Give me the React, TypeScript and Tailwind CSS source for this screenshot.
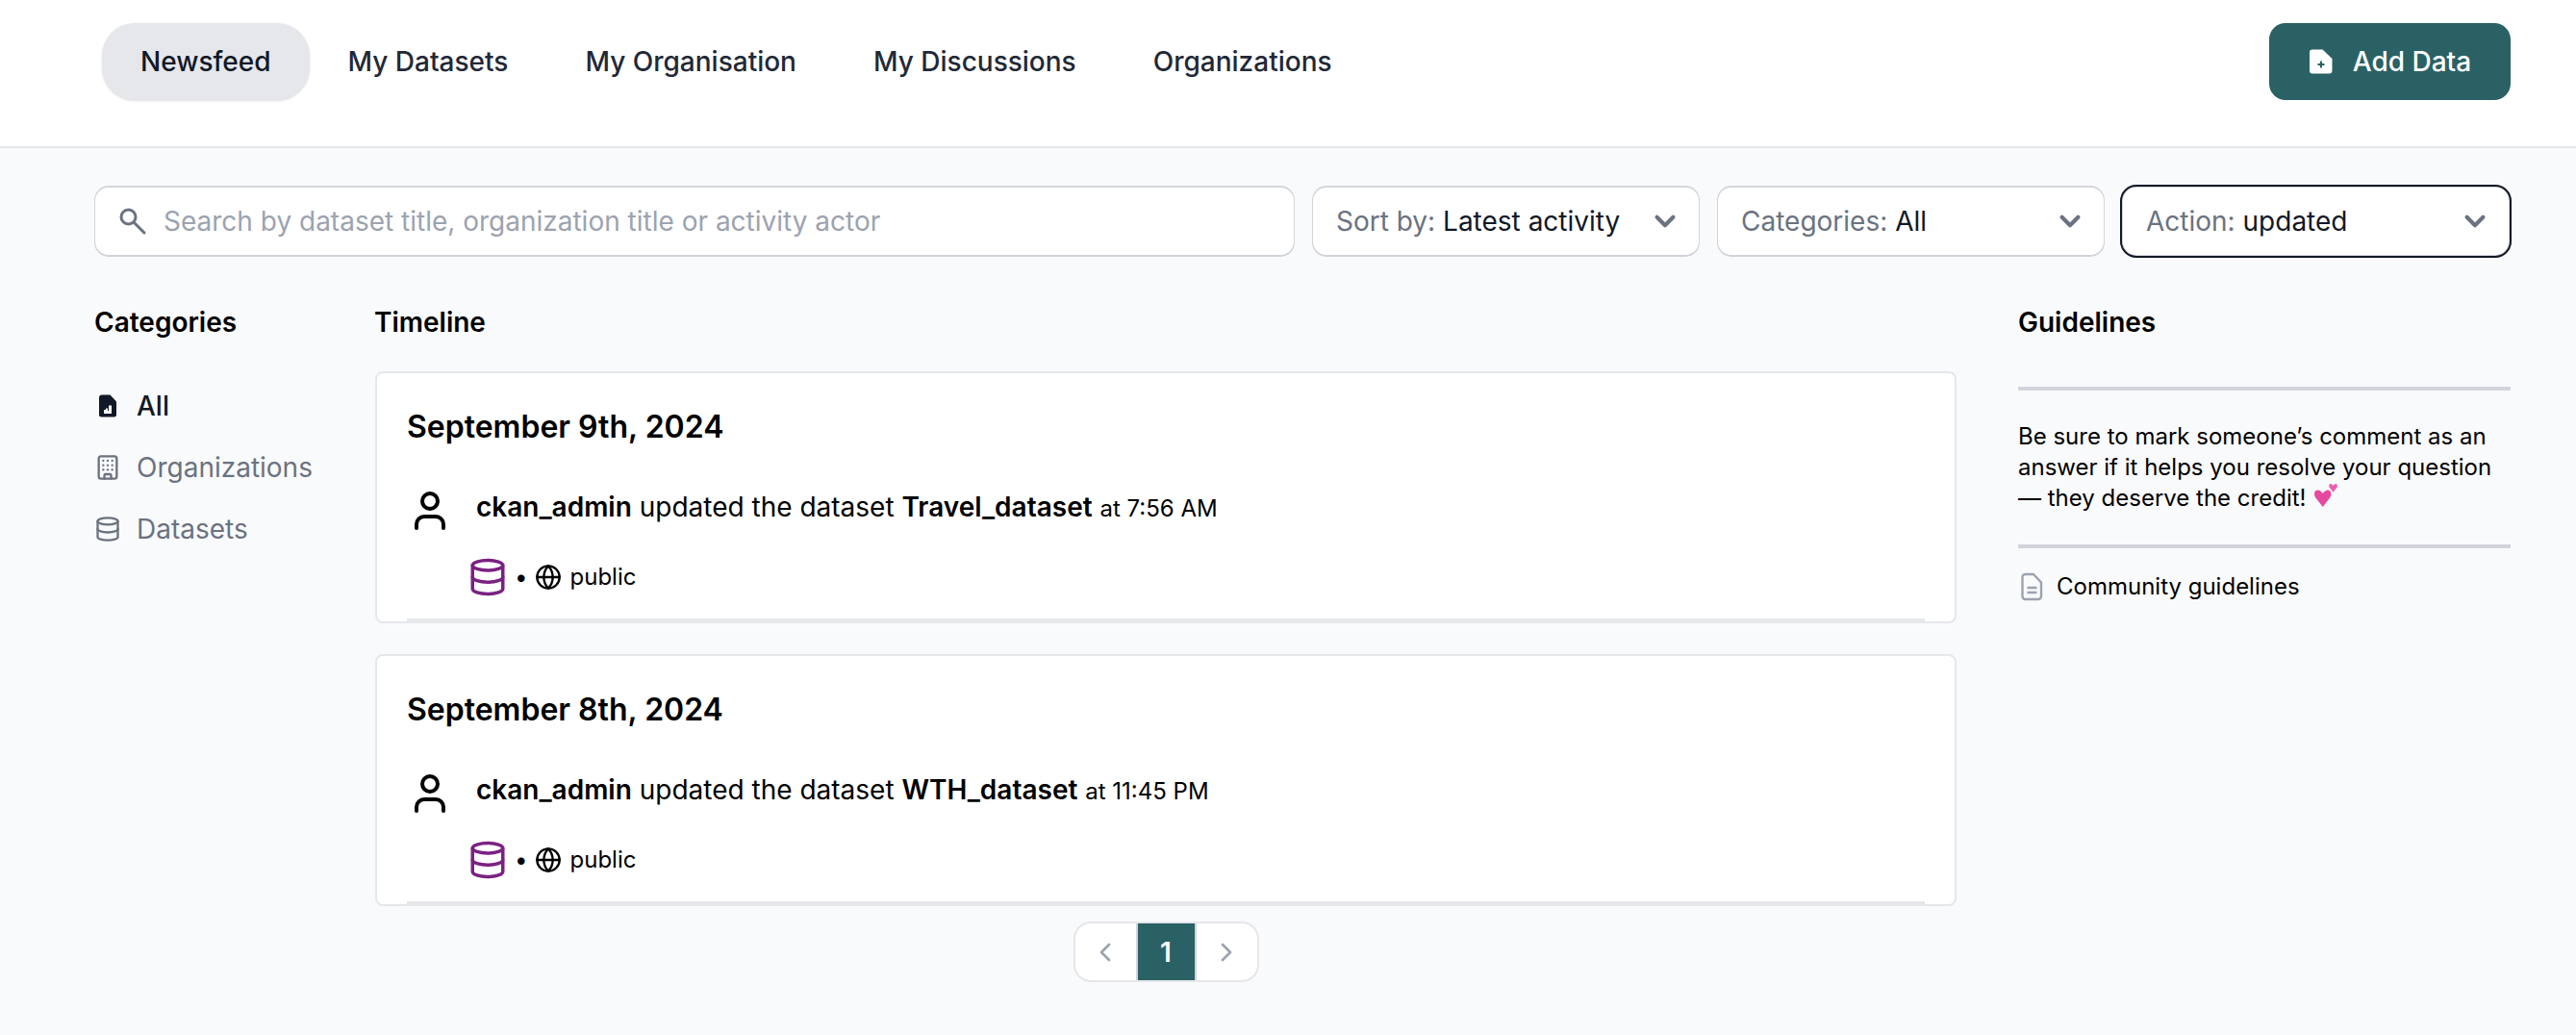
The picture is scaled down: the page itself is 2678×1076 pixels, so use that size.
import React from 'react';
import { Building, ChevronLeft, ChevronRight, Database, Globe, User } from 'lucide-react';

const navItems = ['Newsfeed', 'My Datasets', 'My Organisation', 'My Discussions', 'Organizations'];

const activities = [
  { date: 'September 9th, 2024', dataset: 'Travel_dataset', time: '7:56 AM' },
  { date: 'September 8th, 2024', dataset: 'WTH_dataset', time: '11:45 PM' },
];

const fieldShadow = 'shadow-[0_-1px_0_1px_#d4d6dd,0_1px_0_1px_#d1d3da]';

const SearchGlyph = () => (
  <svg viewBox="0 0 30 30" fill="none" className="h-[30px] w-[30px] shrink-0">
    <circle cx="10.5" cy="10.5" r="7.5" stroke="#6b7280" strokeWidth="3" />
    <path d="M16 16l11 11" stroke="#6b7280" strokeWidth="3" strokeLinecap="round" />
  </svg>
);

const SelectArrow = () => (
  <svg viewBox="0 0 20 20" fill="none" className="h-[42px] w-[42px] shrink-0">
    <path d="M6 8l4 4 4-4" stroke="#6b7280" strokeWidth="2" strokeLinecap="round" strokeLinejoin="round" />
  </svg>
);

// Filter dropdown in the toolbar
const Filter = ({ label, value, focused }: { label: string; value: string; focused?: boolean }) => (
  <div
    className={`flex h-[70px] w-[401px] items-center justify-between rounded-[14px] bg-white pr-[14px] pl-6 text-[28px] ${fieldShadow} ${
      focused ? 'outline-2 outline-offset-1 outline-[#111827]' : ''
    }`}
  >
    <span>
      <span className="text-[#6b7280]">{label}: </span>
      <span className="text-[#111827]">{value}</span>
    </span>
    <SelectArrow />
  </div>
);

const AddFile = () => (
  <svg viewBox="0 0 24 26" className="h-[26px] w-[24px] shrink-0">
    <path d="M3 0.5h10.5L23.5 10v12.5a3 3 0 0 1-3 3H3a3 3 0 0 1-3-3v-19a3 3 0 0 1 3-3z" fill="#fff" />
    <path d="M12 12.5v7M8.5 16h7" stroke="#2a6165" strokeWidth="2" />
  </svg>
);

const ChartFile = () => (
  <svg viewBox="0 0 28 28" className="h-[28px] w-[28px] shrink-0">
    <path
      d="M8 2.5h8.5L23 9.5V23a2.5 2.5 0 0 1-2.5 2.5h-13A2.5 2.5 0 0 1 5 23V5.5a3 3 0 0 1 3-3z"
      fill="#111827"
    />
    <path d="M10 22v-4h2v-1.5h2V19h1v-5.5h3V22z" fill="#fff" />
  </svg>
);

const GuideFile = () => (
  <svg viewBox="0 0 30 30" fill="none" className="h-[30px] w-[30px] shrink-0 text-[#9ca3af]">
    <path
      d="M7.5 2h8.5l8 8.5V25a3 3 0 0 1-3 3H7.5a3 3 0 0 1-3-3V5a3 3 0 0 1 3-3z"
      stroke="currentColor"
      strokeWidth="2.4"
      strokeLinejoin="round"
    />
    <path d="M9.5 16h10M9.5 21h10" stroke="currentColor" strokeWidth="2.4" />
  </svg>
);

const Hearts = () => (
  <svg viewBox="0 0 24 24" className="ml-2 inline-block h-[26px] w-[26px] align-[-2px]">
    <path d="M9 23 L2 14 C-1 9 3 5 7 8 L9 10 L11 8 C15 5 19 9 16 14 Z" fill="#e64aa0" />
    <path d="M19 9 L15.5 4.5 C14 2 16 0 18 1.5 L19 2.5 L20 1.5 C22 0 24 2 22.5 4.5 Z" fill="#ec5fb0" />
  </svg>
);

const ActivityCard = ({ date, dataset, time }: { date: string; dataset: string; time: string }) => (
  <div className="h-[262px] rounded-[8px] border-2 border-[#e5e7eb] bg-white px-[31px] pt-[36px]">
    <div className="flex h-full flex-col border-b-[3px] border-[#e5e7eb]">
      <h3 className="text-[32px] leading-[40px] font-semibold text-black">{date}</h3>
      <div className="mt-[43px] flex items-start">
        <User size={48} strokeWidth={2} className="shrink-0 text-black" />
        <p className="ml-[24px] text-[28px] leading-[40px] text-black">
          <b className="font-semibold">ckan_admin</b> updated the dataset <b className="font-semibold">{dataset}</b>{' '}
          <span className="text-[24px]">at {time}</span>
        </p>
      </div>
      <div className="mt-[24px] ml-[63px] flex items-center text-[24px] text-black">
        <Database size={42} strokeWidth={2} className="text-[#7b2182]" />
        <span className="ml-[7px] text-[24px]">•</span>
        <Globe size={28} strokeWidth={2} className="ml-[7px]" />
        <span className="ml-[9px]">public</span>
      </div>
    </div>
  </div>
);

export default function App() {
  return (
    <div className="min-h-[1076px] bg-[#f9fafb] font-['Inter',sans-serif]">
      <header className="flex h-[154px] items-start justify-between border-b-2 border-[#e5e7eb] bg-white pt-6 pr-[68px] pl-[106px]">
        <nav className="flex">
          {navItems.map((item, i) => (
            <a
              key={item}
              className={`flex h-20 items-center rounded-[34px] px-10 text-[28px] font-medium ${
                i === 0 ? 'bg-[#e5e7eb] text-[#111827] shadow-sm' : 'text-[#1f2937]'
              }`}
            >
              {item}
            </a>
          ))}
        </nav>
        <button className="flex h-20 w-[251px] items-center justify-center gap-[21px] rounded-[17px] bg-[#2a6165] pl-[1px] text-[28px] font-medium text-white">
          <AddFile />
          Add Data
        </button>
      </header>

      <main className="pt-[41px] pr-[68px] pl-[98px]">
        <div className="mr-[2px] ml-[1px] flex gap-5">
          <div className={`flex h-[70px] flex-1 items-center rounded-[14px] bg-white pl-6 text-[28px] text-[#9ca3af] ${fieldShadow}`}>
            <SearchGlyph />
            <span className="ml-[17px]">Search by dataset title, organization title or activity actor</span>
          </div>
          <Filter label="Sort by" value="Latest activity" />
          <Filter label="Categories" value="All" />
          <Filter label="Action" value="updated" focused />
        </div>

        <div className="mt-[52px] flex">
          <aside className="w-[292px] shrink-0">
            <h2 className="text-[28px] leading-[36px] font-semibold text-black">Categories</h2>
            <ul className="mt-[51px] flex flex-col gap-[28px] text-[28px] leading-[36px] font-medium">
              <li className="flex items-center gap-[16px] text-[#111827]">
                <ChartFile />
                All
              </li>
              <li className="flex items-center gap-[16px] font-normal text-[#6b7280]">
                <Building size={28} strokeWidth={2} />
                Organizations
              </li>
              <li className="flex items-center gap-[16px] font-normal text-[#6b7280]">
                <Database size={28} strokeWidth={2} />
                Datasets
              </li>
            </ul>
          </aside>

          <section className="w-[1644px] shrink-0">
            <h2 className="-ml-[1px] text-[28px] leading-[36px] font-semibold text-black">Timeline</h2>
            <div className="mt-[33px] flex flex-col gap-[32px]">
              {activities.map((a) => (
                <ActivityCard key={a.date} {...a} />
              ))}
            </div>
            <div className="mt-[16px] flex justify-center">
              <div className="flex h-[63px] overflow-hidden rounded-[18px] border-2 border-[#e5e7eb] bg-white">
                <span className="flex w-[63px] items-center justify-center text-[#9ca3af]">
                  <ChevronLeft size={32} strokeWidth={2} />
                </span>
                <span className="-my-[2px] flex h-[63px] w-[63px] items-center justify-center border-2 border-[#d1d5db] bg-[#2a6165] text-[28px] font-semibold text-white">
                  1
                </span>
                <span className="flex w-[63px] items-center justify-center text-[#9ca3af]">
                  <ChevronRight size={32} strokeWidth={2} />
                </span>
              </div>
            </div>
          </section>

          <aside className="ml-[64px] flex-1">
            <h2 className="text-[28px] leading-[36px] font-semibold text-black">Guidelines</h2>
            <div className="mt-[49px] border-y-4 border-[#d1d5db] py-[32px] text-[24px] leading-[32px] text-black">
              Be sure to mark someone’s comment as an answer if it helps you resolve your question — they deserve the credit!
              <Hearts />
            </div>
            <div className="mt-[22px] flex items-center text-[24px] text-black">
              <GuideFile />
              <span className="ml-[10px]">Community guidelines</span>
            </div>
          </aside>
        </div>
      </main>
    </div>
  );
}
